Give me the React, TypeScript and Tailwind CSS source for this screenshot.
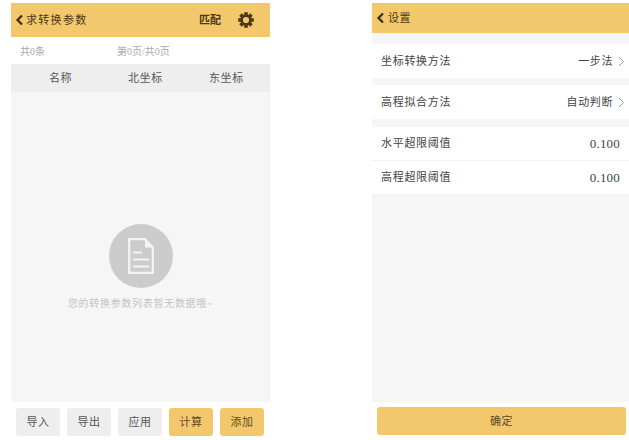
import React from "react";

const font = { fontFamily: '"Liberation Serif", "Noto Sans CJK SC", serif' };

function Back() {
  return (
    <svg width="9" height="12" viewBox="0 0 9 12" className="shrink-0">
      <path d="M7 1.5 L2.5 6 L7 10.5" fill="none" stroke="#3a2c10" strokeWidth="2.2" />
    </svg>
  );
}

function Gear() {
  const teeth = [0, 45, 90, 135, 180, 225, 270, 315];
  return (
    <svg width="16" height="16" viewBox="0 0 16 16">
      {teeth.map((a) => (
        <rect key={a} x="6.2" y="0.2" width="3.6" height="3.4" fill="#4a3a18" transform={`rotate(${a} 8 8)`} />
      ))}
      <circle cx="8" cy="8" r="4.4" fill="none" stroke="#4a3a18" strokeWidth="2.6" />
    </svg>
  );
}

function Chevron() {
  return (
    <svg width="7" height="11" viewBox="0 0 7 11" className="ml-[5px]">
      <path d="M1 1 L5.5 5.5 L1 10" fill="none" stroke="#9a9a9a" strokeWidth="1" />
    </svg>
  );
}

function Doc() {
  return (
    <svg width="26" height="36" viewBox="0 0 26 36">
      <path d="M1.2 1.2 H17 L24.8 9.5 V34.8 H1.2 Z" fill="none" stroke="#f4f4f4" strokeWidth="2.2" />
      <path d="M17 1.5 V9.5 H24.5 Z" fill="#f4f4f4" />
      <path d="M5 14.5 H14 M5 21.5 H21 M5 28.5 H21" stroke="#f4f4f4" strokeWidth="1.8" fill="none" />
    </svg>
  );
}

function Btn({ label, primary }: { label: string; primary?: boolean }) {
  return (
    <div
      className={`flex h-[28px] w-[44px] items-center justify-center rounded-[3px] text-[11px] tracking-[0.5px] ${
        primary ? "bg-[#f3c76c] text-[#5c4a25]" : "bg-[#eeeeee] text-[#555555]"
      }`}
    >
      {label}
    </div>
  );
}

function Row({ label, value, arrow, border }: { label: string; value: string; arrow?: boolean; border?: boolean }) {
  return (
    <div className={`flex h-[34px] items-center bg-white pl-[9px] pr-[4px] text-[#444444] ${border ? "border-b border-[#f2f2f2]" : ""}`}>
      <span className="flex-1 text-[11px] tracking-[0.7px]">{label}</span>
      {arrow ? (
        <>
          <span className="text-[11px] tracking-[0.6px]">{value}</span>
          <Chevron />
        </>
      ) : (
        <span className="mr-[5px] text-[13px] tracking-[0.2px]">{value}</span>
      )}
    </div>
  );
}

export default function App() {
  return (
    <div className="flex h-[440px] w-[629px] overflow-hidden bg-white pt-[3px]" style={font}>
      <div className="ml-[11px] flex h-[434px] w-[259px] flex-col">
        <div className="flex h-[34px] items-center bg-[#f3c76c] pl-[4px] pr-[16px] text-[#4a3a18]">
          <Back />
          <span className="ml-[2px] flex-1 text-[11px] tracking-[1.3px]">求转换参数</span>
          <span className="mr-[17px] text-[11px] font-bold">匹配</span>
          <Gear />
        </div>
        <div className="flex h-[27px] items-center bg-white pl-[9px] pt-[2px] text-[10px] text-[#aaaaaa]">
          <span className="w-[97px]">共0条</span>
          <span>第0页/共0页</span>
        </div>
        <div className="grid h-[28px] grid-cols-[80px_90px_89px] items-center bg-[#eeeeee] text-[11px] tracking-[0.6px] text-[#555555]">
          <span className="pl-[38px]">名称</span>
          <span className="pl-[37px]">北坐标</span>
          <span className="pl-[28px]">东坐标</span>
        </div>
        <div className="flex h-[310px] flex-col items-center bg-[#f6f6f6] pt-[132px]">
          <div className="flex h-[64px] w-[64px] items-center justify-center rounded-full bg-[#cccccc]">
            <Doc />
          </div>
          <div className="mt-[8px] text-[10px] tracking-[0.7px] text-[#c4c4c4]">您的转换参数列表暂无数据哦~</div>
        </div>
        <div className="mt-[6px] flex justify-between px-[5px] pr-[6px]">
          <Btn label="导入" />
          <Btn label="导出" />
          <Btn label="应用" />
          <Btn label="计算" primary />
          <Btn label="添加" primary />
        </div>
      </div>

      <div className="ml-[102px] flex h-[434px] w-[257px] flex-col">
        <div className="flex h-[30px] items-center bg-[#f3c76c] pl-[4px] text-[#4a3a18] shadow-[0_2px_3px_rgba(0,0,0,0.08)]">
          <Back />
          <span className="ml-[3px] text-[11px] tracking-[0.5px]">设置</span>
        </div>
        <div className="flex h-[369px] flex-col bg-[#f6f6f6] pt-[11px]">
          <Row label="坐标转换方法" value="一步法" arrow />
          <div className="h-[7px]" />
          <Row label="高程拟合方法" value="自动判断" arrow />
          <div className="h-[8px]" />
          <Row label="水平超限阈值" value="0.100" border />
          <Row label="高程超限阈值" value="0.100" border />
        </div>
        <div className="ml-[5px] mt-[5px] flex h-[28px] w-[249px] items-center justify-center self-start rounded-[3px] bg-[#f3c76c] text-[11px] tracking-[0.5px] text-[#5c4a25]">
          确定
        </div>
      </div>
    </div>
  );
}
